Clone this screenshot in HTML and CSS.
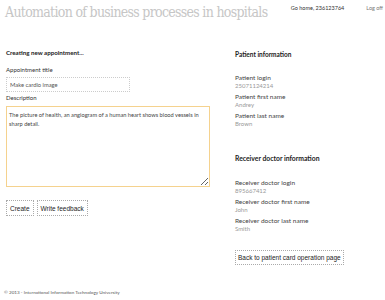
FILE: index.html
```html
<!DOCTYPE html>
<html lang="en">
<head>
    <meta charset="UTF-8">
    <title>Create appointment</title>
    <link rel="stylesheet" href="styles.css">
</head>
<body>

    <div class="header">
        <h1>Automation of business processes in hospitals</h1>
        <div class="user-links">
            <a href="#">Go home, 236123764</a>
            <a href="#" class="logoff">Log off</a>
        </div>
    </div>

    <div class="container">
        <div class="main-col">
            <h2>Creating new appointment...</h2>
            <form id="appointmentForm">
                <label for="title">Appointment title</label>
                <input type="text" id="title" class="title-input" value="Make cardio image">
                <label for="description">Description</label>
                <textarea id="description" class="desc-input">The picture of health, an angiogram of a human heart shows blood vessels in sharp detail.</textarea>
                <div class="actions">
                    <button type="submit" class="btn">Create</button>
                    <button type="button" class="btn">Write feedback</button>
                </div>
            </form>
        </div>

        <div class="side-col">
            <h2 class="patient-head">Patient information</h2>
            <dl class="info">
                <dt>Patient login</dt>
                <dd>25071124214</dd>
                <dt>Patient first name</dt>
                <dd>Andrey</dd>
                <dt>Patient last name</dt>
                <dd>Brown</dd>
            </dl>

            <h2 class="doctor-head">Receiver doctor information</h2>
            <dl class="info">
                <dt>Receiver doctor login</dt>
                <dd>895667412</dd>
                <dt>Receiver doctor first name</dt>
                <dd>John</dd>
                <dt>Receiver doctor last name</dt>
                <dd>Smith</dd>
            </dl>

            <button type="button" class="btn back-btn">Back to patient card operation page</button>
        </div>
    </div>

    <div class="footer">&copy; 2013 - International Information Technology University</div>

</body>
</html>
```

FILE: styles.css
```css
body { font-family: 'Lato', 'Noto Sans', sans-serif; background-color: #ffffff; color: #333; margin: 0; padding: 0; width: 385px; height: 300px; }
.header { display: flex; justify-content: space-between; align-items: flex-start; padding: 3px 2px 0 5px; height: 40px; box-sizing: border-box; }
.header h1 { margin: 0; white-space: nowrap; font-family: 'DejaVu Serif Condensed', 'DejaVu Serif', serif; font-weight: normal; font-size: 14px; line-height: 18px; color: #c6c6c6; letter-spacing: -0.7px; }
.user-links { display: flex; gap: 22px; padding-top: 2px; font-size: 5.5px; white-space: nowrap; }
.user-links a { color: #333; text-decoration: none; }
.user-links .logoff { color: #777; }
.container { display: flex; height: 242px; }
.main-col { width: 230px; padding-left: 6px; box-sizing: border-box; }
.side-col { flex: 1; padding-left: 5px; }
h2 { margin: 0; font-size: 6.2px; line-height: 10px; font-weight: bold; color: #222; padding-top: 8px; }
.side-col .patient-head { font-size: 6.5px; padding-top: 10px; }
.side-col .doctor-head { font-size: 6.8px; padding-top: 22px; }
form { margin-top: 8px; }
label { display: block; font-size: 6px; line-height: 8px; color: #333; }
.title-input { display: block; width: 124px; height: 15px; box-sizing: border-box; border: 1px dotted #ccc; padding: 0 3px; margin: 3px 0 2px; font-family: inherit; font-size: 5.8px; color: #555; outline: none; }
.desc-input { display: block; width: 204px; height: 81px; box-sizing: border-box; border: 1px solid #f5d28e; padding: 3px 2px; margin-top: 4px; font-family: inherit; font-size: 5.7px; line-height: 9px; color: #444; resize: both; outline: none; }
.actions { display: flex; gap: 3px; margin-top: 13px; }
.btn { font-family: 'Liberation Sans', Arial, sans-serif; font-size: 6.5px; color: #222; background: #fff; border: 1px dotted #aaa; padding: 0 3px; height: 16px; cursor: pointer; }
.info { margin: 14px 0 0; }
.info dt { font-size: 6.5px; line-height: 8px; color: #444; }
.info dd { margin: 0 0 3px; font-size: 6px; line-height: 8px; color: #999; }
.doctor-head + .info { margin-top: 16px; }
.back-btn { margin-top: 14px; height: 15px; font-size: 6.5px; padding: 0 2px; }
.footer { padding-left: 4px; font-size: 4.6px; line-height: 8px; color: #555; margin-top: 6px; }
```
